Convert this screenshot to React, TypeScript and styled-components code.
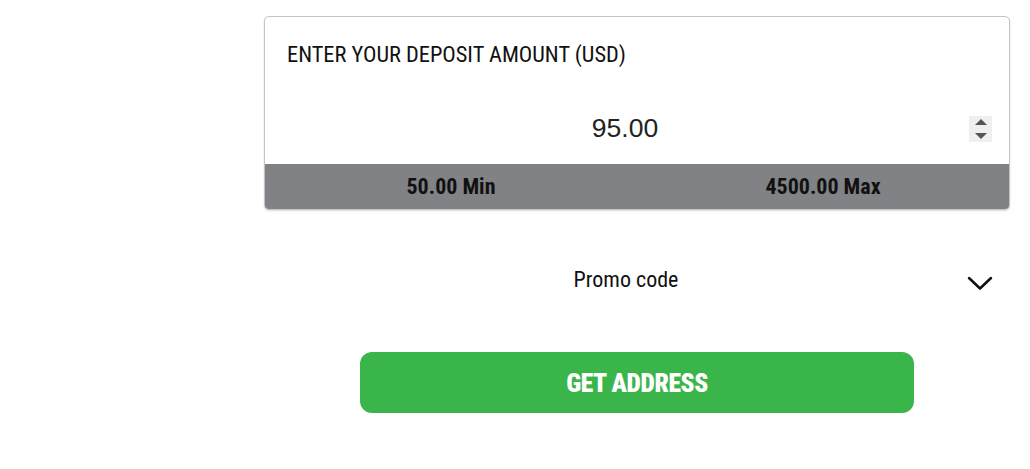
import React from 'react';
import styled, { createGlobalStyle } from 'styled-components';

const GlobalStyle = createGlobalStyle`
    body {
        margin: 0;
        background: #ffffff;
        font-family: "Roboto Condensed", Roboto, sans-serif;
    }
`;

const Page = styled.div`
    width: 746px;
    margin-left: 264px;
    padding-top: 16px;
    display: flex;
    flex-direction: column;
`;

const AmountCard = styled.div`
    border: 1px solid #c4c4c4;
    border-radius: 5px;
    overflow: hidden;
    background: #ffffff;
    box-shadow: 0 1px 2px rgba(0, 0, 0, 0.15);
`;

const CardTitle = styled.div`
    padding: 24px 22px 0;
    font-size: 22.4px;
    line-height: 26px;
    color: #111;
`;

const InputRow = styled.div`
    display: flex;
    align-items: center;
    height: 56px;
    margin-top: 33px;
    padding: 0 17px 0 16px;
`;

const AmountInput = styled.input`
    flex: 1;
    min-width: 0;
    height: 100%;
    padding: 0;
    border: none;
    outline: none;
    background: transparent;
    text-align: center;
    font-family: "Liberation Sans", Arial, sans-serif;
    font-size: 26.5px;
    color: #222;
    -moz-appearance: textfield;

    &::-webkit-inner-spin-button,
    &::-webkit-outer-spin-button {
        -webkit-appearance: none;
        margin: 0;
    }
`;

const Spinner = styled.div`
    width: 23px;
    height: 26px;
    margin-top: 2px;
    background: #efefef;
    display: flex;
    flex-direction: column;
    align-items: center;
    justify-content: center;
    gap: 8px;
`;

const Arrow = styled.span<{ $up?: boolean }>`
    width: 0;
    height: 0;
    border-left: 6px solid transparent;
    border-right: 6px solid transparent;
    ${(p) => (p.$up ? 'border-bottom: 6px solid #555;' : 'border-top: 6px solid #555;')}
`;

const LimitBar = styled.div`
    display: grid;
    grid-template-columns: 1fr 1fr;
    height: 45px;
    margin-top: 8px;
    background: #818285;
`;

const Limit = styled.div`
    display: flex;
    align-items: center;
    justify-content: center;
    font-size: 22px;
    font-weight: 700;
    color: #111;
`;

const PromoRow = styled.button`
    display: flex;
    align-items: center;
    margin-top: 51px;
    height: 36px;
    padding: 0 17px 0 21px;
    border: none;
    background: transparent;
    cursor: pointer;
    font-family: inherit;
`;

const PromoLabel = styled.span`
    flex: 1;
    text-align: center;
    font-size: 22px;
    color: #111;
`;

const ChevronIcon = styled.svg`
    margin-top: 8px;
`;

const SubmitButton = styled.button`
    align-self: center;
    width: 554px;
    height: 61px;
    margin-top: 55px;
    border: none;
    border-radius: 12px;
    background: #3ab54a;
    color: #ffffff;
    font-family: "Roboto Condensed", Roboto, sans-serif;
    font-weight: 900;
    font-size: 25.5px;
    letter-spacing: -0.4px;
    cursor: pointer;
`;

function Chevron() {
    return (
        <ChevronIcon width="26" height="15" viewBox="0 0 26 15" fill="none">
            <path d="M2 2l11 10.5L24 2" stroke="#111" strokeWidth="2.5" strokeLinecap="round" strokeLinejoin="round" />
        </ChevronIcon>
    );
}

export default function App() {
    return (
        <>
            <GlobalStyle />
            <Page>
                <AmountCard>
                    <CardTitle>ENTER YOUR DEPOSIT AMOUNT (USD)</CardTitle>
                    <InputRow>
                        <AmountInput type="number" defaultValue="95.00" step="0.01" />
                        <Spinner>
                            <Arrow $up />
                            <Arrow />
                        </Spinner>
                    </InputRow>
                    <LimitBar>
                        <Limit>50.00 Min</Limit>
                        <Limit>4500.00 Max</Limit>
                    </LimitBar>
                </AmountCard>
                <PromoRow>
                    <PromoLabel>Promo code</PromoLabel>
                    <Chevron />
                </PromoRow>
                <SubmitButton>GET ADDRESS</SubmitButton>
            </Page>
        </>
    );
}
